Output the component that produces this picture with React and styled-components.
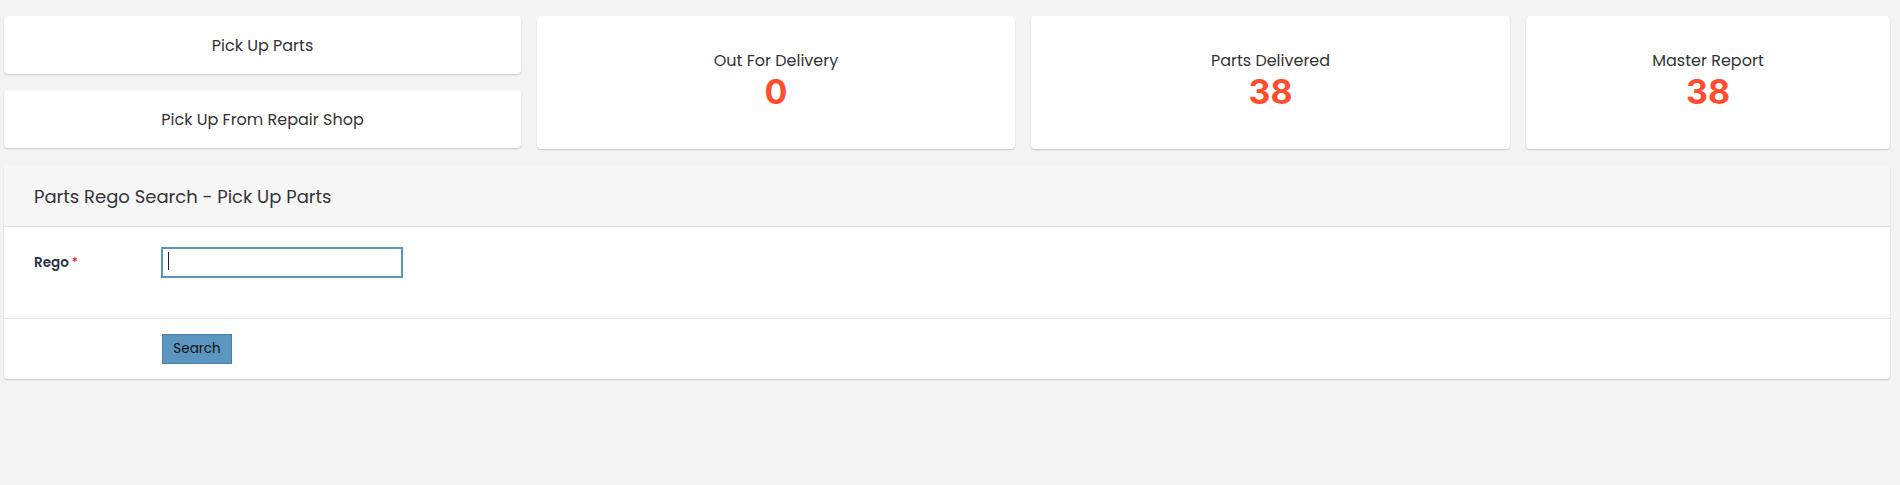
import React from "react";
import styled, { createGlobalStyle } from "styled-components";

const GlobalStyle = createGlobalStyle`
  * { box-sizing: border-box; }
  html, body {
    margin: 0;
    padding: 0;
    background: #f2f3f5;
    font-family: "Poppins", "Open Sans", "Liberation Sans", sans-serif;
    color: #333;
  }
`;

const Page = styled.div`
  padding: 16px 10px 0 4px;
  min-height: 485px;
`;

const TopGrid = styled.div`
  display: grid;
  grid-template-columns: 517px 478px 479px 1fr;
  column-gap: 16px;
`;

const Stack = styled.div`
  display: flex;
  flex-direction: column;
  gap: 16px;
`;

const Card = styled.div`
  background: #fff;
  border-radius: 4px;
  box-shadow: 0 1px 2px rgba(0, 0, 0, 0.14), 0 1px 1px rgba(0, 0, 0, 0.05);
`;

const LinkCard = styled(Card)`
  height: 58px;
  display: flex;
  align-items: center;
  justify-content: center;
  padding-top: 1px;
  font-size: 16px;
  line-height: 24px;
  color: #333;
  cursor: pointer;
`;

const StatCard = styled(Card)`
  display: flex;
  flex-direction: column;
  align-items: center;
  padding-top: 33px;
  height: 133px;
`;

const StatLabel = styled.div`
  font-size: 16px;
  line-height: 24px;
  color: #333;
`;

const StatValue = styled.div`
  margin-top: 2px;
  font-family: "Inter", "Open Sans", sans-serif;
  font-weight: 700;
  font-size: 34px;
  line-height: 34px;
  color: #ff4d2d;
`;

const Panel = styled(Card)`
  margin-top: 16px;
  overflow: hidden;
`;

const PanelHeader = styled.div`
  height: 62px;
  display: flex;
  align-items: center;
  padding: 0 30px;
  background: #f6f6f7;
  border-bottom: 1px solid #e2e2e4;
`;

const PanelTitle = styled.h3`
  margin: 0;
  padding-top: 1px;
  font-weight: 400;
  font-size: 18px;
  line-height: 23px;
  color: #333;
`;

const PanelBody = styled.div`
  padding: 20px 30px 40px;
`;

const FormRow = styled.div`
  display: flex;
  align-items: center;
`;

const Label = styled.label`
  width: 127px;
  font-size: 13.5px;
  font-weight: 600;
  color: #2b3245;
`;

const Required = styled.span`
  color: #e8262b;
  margin-left: 3px;
  font-size: 12px;
  vertical-align: 1px;
`;

const InputWrap = styled.div`
  position: relative;
  width: 242px;
  height: 31px;
`;

const TextInput = styled.input`
  width: 100%;
  height: 100%;
  border: 2px solid #5b93bf;
  border-radius: 0;
  outline: none;
  padding: 0 6px;
  font-family: inherit;
  font-size: 14px;
  background: #fff;
  caret-color: transparent;
`;

const Caret = styled.span`
  position: absolute;
  left: 7px;
  top: 5px;
  width: 1px;
  height: 18px;
  background: #222;
`;

const PanelFooter = styled.div`
  border-top: 1px solid #e6e6e8;
  padding: 15px 30px 15px 158px;
`;

const Button = styled.button`
  width: 70px;
  height: 30px;
  background: #5b95c0;
  border: 1px solid #4b80aa;
  border-radius: 0;
  color: #111;
  font-family: inherit;
  font-size: 13.5px;
  padding: 0;
  cursor: pointer;
`;

const stats = [
  { label: "Out For Delivery", value: 0 },
  { label: "Parts Delivered", value: 38 },
  { label: "Master Report", value: 38 },
];

export default function App() {
  return (
    <>
      <GlobalStyle />
      <Page>
        <TopGrid>
          <Stack>
            <LinkCard>Pick Up Parts</LinkCard>
            <LinkCard>Pick Up From Repair Shop</LinkCard>
          </Stack>
          {stats.map((s) => (
            <StatCard key={s.label}>
              <StatLabel>{s.label}</StatLabel>
              <StatValue>{s.value}</StatValue>
            </StatCard>
          ))}
        </TopGrid>
        <Panel>
          <PanelHeader>
            <PanelTitle>Parts Rego Search - Pick Up Parts</PanelTitle>
          </PanelHeader>
          <PanelBody>
            <FormRow>
              <Label htmlFor="rego">
                Rego<Required>*</Required>
              </Label>
              <InputWrap>
                <TextInput id="rego" type="text" />
                <Caret />
              </InputWrap>
            </FormRow>
          </PanelBody>
          <PanelFooter>
            <Button type="button">Search</Button>
          </PanelFooter>
        </Panel>
      </Page>
    </>
  );
}
